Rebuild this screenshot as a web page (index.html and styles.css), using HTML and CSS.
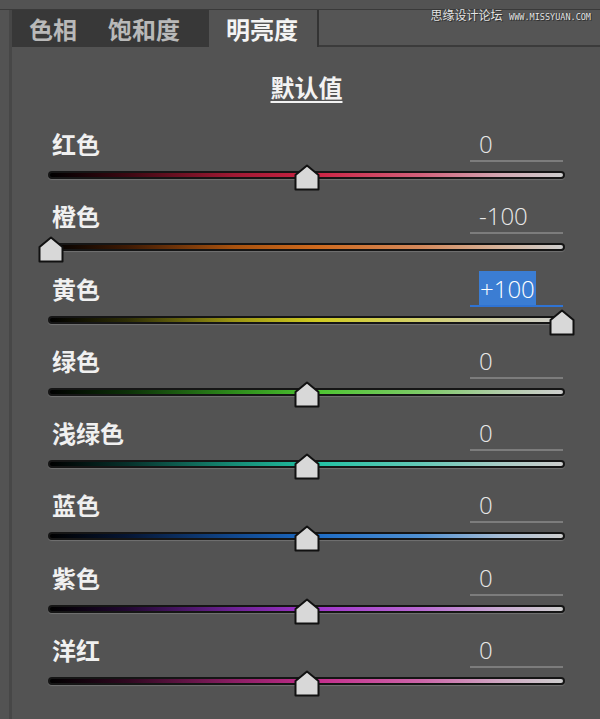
FILE: index.html
```html
<!DOCTYPE html>
<html lang="zh-CN">
<head>
    <meta charset="UTF-8">
    <meta name="viewport" content="width=device-width, initial-scale=1.0">
    <title>HSL 明亮度</title>
    <link rel="stylesheet" href="styles.css">
</head>
<body>
    <div class="watermark">思缘设计论坛 <span class="watermark-url">WWW.MISSYUAN.COM</span></div>
    <div class="panel">
        <div class="tabs">
            <div class="tab-group">
                <span class="tab">色相</span>
                <span class="tab tab-wide">饱和度</span>
            </div>
            <span class="tab active">明亮度</span>
            <div class="tab-rest"></div>
        </div>
        <div class="content">
            <div class="defaults"><span>默认值</span></div>

            <div class="row">
                <div class="row-head"><span class="label">红色</span><span class="value">0</span></div>
                <div class="slider"><div class="track red"></div><div class="rail"><svg class="thumb" style="left: 50%" viewBox="0 0 26 27"><polygon points="1.5,11 13,1.5 24.5,11 24.5,25.5 1.5,25.5"/></svg></div></div>
            </div>
            <div class="row">
                <div class="row-head"><span class="label">橙色</span><span class="value">-100</span></div>
                <div class="slider"><div class="track orange"></div><div class="rail"><svg class="thumb" style="left: 0%" viewBox="0 0 26 27"><polygon points="1.5,11 13,1.5 24.5,11 24.5,25.5 1.5,25.5"/></svg></div></div>
            </div>
            <div class="row">
                <div class="row-head"><span class="label">黄色</span><span class="value focused"><span class="selected">+100</span></span></div>
                <div class="slider"><div class="track yellow"></div><div class="rail"><svg class="thumb" style="left: 100%" viewBox="0 0 26 27"><polygon points="1.5,11 13,1.5 24.5,11 24.5,25.5 1.5,25.5"/></svg></div></div>
            </div>
            <div class="row">
                <div class="row-head"><span class="label">绿色</span><span class="value">0</span></div>
                <div class="slider"><div class="track green"></div><div class="rail"><svg class="thumb" style="left: 50%" viewBox="0 0 26 27"><polygon points="1.5,11 13,1.5 24.5,11 24.5,25.5 1.5,25.5"/></svg></div></div>
            </div>
            <div class="row">
                <div class="row-head"><span class="label">浅绿色</span><span class="value">0</span></div>
                <div class="slider"><div class="track aqua"></div><div class="rail"><svg class="thumb" style="left: 50%" viewBox="0 0 26 27"><polygon points="1.5,11 13,1.5 24.5,11 24.5,25.5 1.5,25.5"/></svg></div></div>
            </div>
            <div class="row">
                <div class="row-head"><span class="label">蓝色</span><span class="value">0</span></div>
                <div class="slider"><div class="track blue"></div><div class="rail"><svg class="thumb" style="left: 50%" viewBox="0 0 26 27"><polygon points="1.5,11 13,1.5 24.5,11 24.5,25.5 1.5,25.5"/></svg></div></div>
            </div>
            <div class="row">
                <div class="row-head"><span class="label">紫色</span><span class="value">0</span></div>
                <div class="slider"><div class="track purple"></div><div class="rail"><svg class="thumb" style="left: 50%" viewBox="0 0 26 27"><polygon points="1.5,11 13,1.5 24.5,11 24.5,25.5 1.5,25.5"/></svg></div></div>
            </div>
            <div class="row">
                <div class="row-head"><span class="label">洋红</span><span class="value">0</span></div>
                <div class="slider"><div class="track magenta"></div><div class="rail"><svg class="thumb" style="left: 50%" viewBox="0 0 26 27"><polygon points="1.5,11 13,1.5 24.5,11 24.5,25.5 1.5,25.5"/></svg></div></div>
            </div>
        </div>
    </div>
</body>
</html>
```

FILE: styles.css
```css
body {
    margin: 0;
    background-color: #535353;
    font-family: "Noto Sans CJK SC", sans-serif;
    color: #eeeeee;
    overflow: hidden;
}
.watermark {
    position: absolute;
    top: 7px;
    right: 9px;
    font-size: 12px;
    line-height: 16px;
    color: #e6e6e6;
    text-shadow: 0 0 1px #222, 1px 1px 0 #333;
}
.watermark-url {
    font-family: "DejaVu Sans Mono", monospace;
    font-size: 8.5px;
    margin-left: 4px;
}
.panel {
    margin-top: 9px;
    border-top: 1px solid #3a3a3a;
}
.tabs {
    display: flex;
    height: 37px;
    margin-left: 9px;
    border-left: 3px solid #474747;
}
.tab-group {
    display: flex;
    background-color: #383838;
}
.tab {
    display: flex;
    align-items: center;
    padding: 0 14px 0 17px;
    font-size: 24px;
    font-weight: bold;
    color: #b9b9b9;
}
.tab-wide {
    padding-right: 29px;
}
.tab.active {
    color: #f4f4f4;
    padding-right: 19px;
    border-right: 2px solid #333333;
}
.tab-rest {
    flex: 1;
    background-color: #555555;
    border-bottom: 2px solid #3b3b3b;
}
.content {
    margin-left: 9px;
    border-left: 3px solid #474747;
    padding: 25px 35px 20px 36px;
}
.defaults {
    text-align: center;
    font-size: 24px;
    font-weight: bold;
    line-height: 30px;
    color: #f2f2f2;
    margin-bottom: 24px;
}
.defaults span {
    text-decoration: underline;
    text-underline-offset: 4px;
    text-decoration-thickness: 2px;
}
.row {
    height: 72.3px;
}
.row-head {
    display: flex;
    justify-content: space-between;
    height: 36px;
}
.label {
    margin-left: 4px;
    font-size: 24px;
    font-weight: bold;
    line-height: 36px;
    color: #f0f0f0;
}
.value {
    width: 84px;
    margin-right: 2px;
    padding-left: 9px;
    border-bottom: 2px solid #7c7c7c;
    font-family: "Open Sans", sans-serif;
    font-weight: 300;
    font-size: 24px;
    line-height: 36px;
    color: #e8e8e8;
}
.value.focused {
    border-bottom-color: #2f73d3;
}
.selected {
    background-color: #3b7dd3;
    color: #ffffff;
    padding: 1px 1px 0;
}
.slider {
    position: relative;
    height: 36px;
    padding-top: 9px;
    box-sizing: border-box;
}
.track {
    height: 4px;
    border: 2px solid #151515;
    border-radius: 4px;
    box-shadow: 0 1px 1px rgba(255, 255, 255, 0.18);
}
.rail {
    position: absolute;
    top: 2px;
    left: 3px;
    right: 3px;
}
.thumb {
    position: absolute;
    top: 0;
    width: 26px;
    height: 27px;
    margin-left: -13px;
}
.thumb polygon {
    fill: #d8d8d8;
    stroke: #111111;
    stroke-width: 2;
    stroke-linejoin: round;
}
.red { background: linear-gradient(to right, #000 0%, #3c0812 15%, #a01a34 36%, #cc2444 52%, #d2607a 72%, #d2a8b2 88%, #cdcdcd 100%); }
.orange { background: linear-gradient(to right, #000 0%, #3e1a04 15%, #a8520f 36%, #cf6a1e 52%, #d4885a 72%, #d6b49c 88%, #cecece 100%); }
.yellow { background: linear-gradient(to right, #000 0%, #2e2e06 15%, #9c9614 36%, #cfca22 52%, #d2cf6a 72%, #cfcda8 88%, #cecece 100%); }
.green { background: linear-gradient(to right, #000 0%, #0c3008 15%, #2e8c1c 36%, #4ec432 52%, #7cca66 72%, #b0cca8 88%, #cecece 100%); }
.aqua { background: linear-gradient(to right, #000 0%, #06302a 15%, #168c76 36%, #22c2a4 52%, #62c8b6 72%, #a8ccc6 88%, #cecece 100%); }
.blue { background: linear-gradient(to right, #000 0%, #061634 15%, #11488e 36%, #1d6cc6 52%, #4f90d2 72%, #a6bcd4 88%, #cecece 100%); }
.purple { background: linear-gradient(to right, #000 0%, #220832 15%, #6e2296 36%, #a036cc 52%, #b868d2 72%, #c8aad2 88%, #cecece 100%); }
.magenta { background: linear-gradient(to right, #000 0%, #300820 15%, #8c1e64 36%, #c42e8c 52%, #cc64a8 72%, #cfa8c2 88%, #cecece 100%); }
```
